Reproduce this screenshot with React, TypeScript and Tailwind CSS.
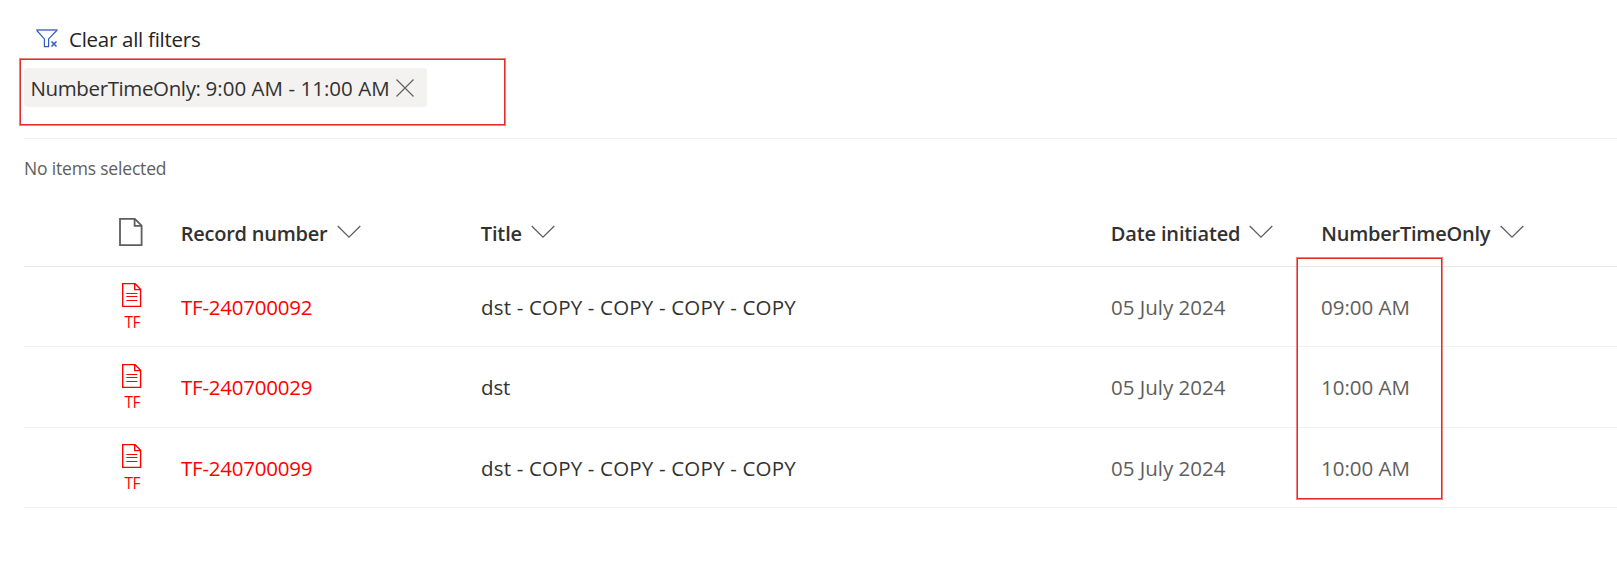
function ClearFilterIcon() {
  return (
    <svg width="22" height="20" viewBox="0 0 22 20" fill="none" stroke="#2f5bc0" className="mb-[2px] shrink-0">
      <path d="M0.3 2H21.7" stroke="#7f92cf" strokeWidth="2" />
      <path d="M0.8 2.5L8.4 10.9V18.6H12.6V10.9L20.8 2.5" strokeWidth="1.2" />
      <path d="M15.5 13.5L20.5 18.5M20.5 13.5L15.5 18.5" strokeWidth="1.5" />
    </svg>
  );
}

function CloseIcon() {
  return (
    <svg width="18" height="18" viewBox="0 0 18 18" fill="none" stroke="#605e5c" strokeWidth="1.1" className="shrink-0">
      <path d="M0.5 0.5L17.5 17.5M17.5 0.5L0.5 17.5" />
    </svg>
  );
}

function ChevronIcon() {
  return (
    <svg width="24" height="14" viewBox="0 0 24 14" fill="none" stroke="#605e5c" strokeWidth="1.3" className="mb-px shrink-0">
      <path d="M0.7 1L12 12.2L23.3 1" />
    </svg>
  );
}

function PageIcon() {
  return (
    <svg width="24" height="28" viewBox="0 0 24 28" fill="none" stroke="#605e5c" strokeWidth="1.8">
      <path d="M1 0.9H15.8L22.6 7.6V27.1H1Z" />
      <path d="M15.6 0.9V7.9H22.6" />
    </svg>
  );
}

function DocumentIcon() {
  return (
    <svg width="20" height="24" viewBox="0 0 20 24" fill="none" stroke="#ff0000" strokeWidth="1.4" className="shrink-0">
      <path d="M0.7 0.6H13L18.6 6.4V23.4H0.7Z" />
      <path d="M12.7 0.6V6.6H18.6" />
      <path d="M4.3 10.5H15.3M4.3 13.5H15.3M4.3 17.5H15.3" strokeWidth="1.1" />
    </svg>
  );
}

const columns = [
  { label: "Record number", width: "w-[300px]", text: "tracking-[-0.25px]", gap: "gap-[9.5px]" },
  { label: "Title", width: "w-[630px]", text: "tracking-[-0.15px]", gap: "gap-[9.5px]" },
  { label: "Date initiated", width: "w-[210.5px]", text: "tracking-[-0.15px]", gap: "gap-[9px]" },
  { label: "NumberTimeOnly", width: "w-[295px]", text: "tracking-[-0.24px]", gap: "gap-[9.5px]" },
];

const rows = [
  { id: "TF-240700092", title: "dst - COPY - COPY - COPY - COPY", date: "05 July 2024", time: "09:00 AM", height: "h-20", icon: "pt-4", label: "pt-[4.5px]", text: "pt-px" },
  { id: "TF-240700029", title: "dst", date: "05 July 2024", time: "10:00 AM", height: "h-[81px]", icon: "pt-[17px]", label: "pt-[3.5px]", text: "pb-px" },
  { id: "TF-240700099", title: "dst - COPY - COPY - COPY - COPY", date: "05 July 2024", time: "10:00 AM", height: "h-20", icon: "pt-4", label: "pt-[4.5px]", text: "pt-px" },
];

export default function App() {
  return (
    <div className="relative h-[574px] w-full overflow-hidden bg-white pl-6 font-['Open_Sans',sans-serif] text-[20.5px] text-[#323130]">
      <div className="flex h-[68px] items-center gap-[11px] pt-[10px] pl-3">
        <ClearFilterIcon />
        <span className="leading-7 tracking-[-0.27px] text-[#242424]">Clear all filters</span>
      </div>

      <div className="flex h-[39px] w-[403px] items-center rounded-[3px] bg-[#f3f2f1] pl-[6.5px]">
        <span className="mr-[6px] leading-7 whitespace-nowrap">
          <span className="tracking-[-0.38px]">NumberTimeOnly: </span>
          <span className="tracking-[0.04px]">9:00 AM - 11:00 AM</span>
        </span>
        <CloseIcon />
      </div>

      <div className="mt-[31px] h-px bg-[#f0f0f0]" />

      <div className="flex h-[59px] items-center pb-[1px] text-[17.5px] tracking-[-0.18px] text-[#605e5c]">
        <span>No items selected</span>
      </div>

      <div className="flex h-[69px] items-center border-b border-[#e8e8e8]">
        <div className="w-[156.8px] shrink-0 pl-[95px]">
          <PageIcon />
        </div>
        {columns.map((c) => (
          <div key={c.label} className={`flex shrink-0 items-center text-xl leading-7 font-semibold ${c.width} ${c.gap}`}>
            <span className={`pt-[3px] ${c.text}`}>{c.label}</span>
            <ChevronIcon />
          </div>
        ))}
      </div>

      {rows.map((r) => (
        <div key={r.id} className={`flex items-center border-b border-[#f0f0f0] leading-7 ${r.height}`}>
          <div className={`flex h-full w-[157px] shrink-0 flex-col pl-[98px] ${r.icon}`}>
            <DocumentIcon />
            <span className={`pl-[2.5px] text-[15.5px] leading-5 tracking-[-0.5px] text-[#ff0000] ${r.label}`}>TF</span>
          </div>
          <div className={`w-[300px] shrink-0 tracking-[-0.22px] text-[#ff0000] ${r.text}`}>{r.id}</div>
          <div className={`w-[630px] shrink-0 ${r.text} ${r.title.length > 3 ? "tracking-[0.18px]" : "tracking-[-0.1px]"}`}>{r.title}</div>
          <div className={`w-[210px] shrink-0 text-[#605e5c] ${r.text}`}>{r.date}</div>
          <div className={`shrink-0 text-[#605e5c] ${r.text}`}>{r.time}</div>
        </div>
      ))}

      <div className="pointer-events-none absolute top-[58px] left-[19px] h-[68px] w-[487px] border border-[#f08080] inset-ring inset-ring-[#e62a2a]" />
      <div className="pointer-events-none absolute top-[257px] left-[1296px] h-[243px] w-[147px] border border-[#f08080] inset-ring inset-ring-[#e62a2a]" />
    </div>
  );
}
